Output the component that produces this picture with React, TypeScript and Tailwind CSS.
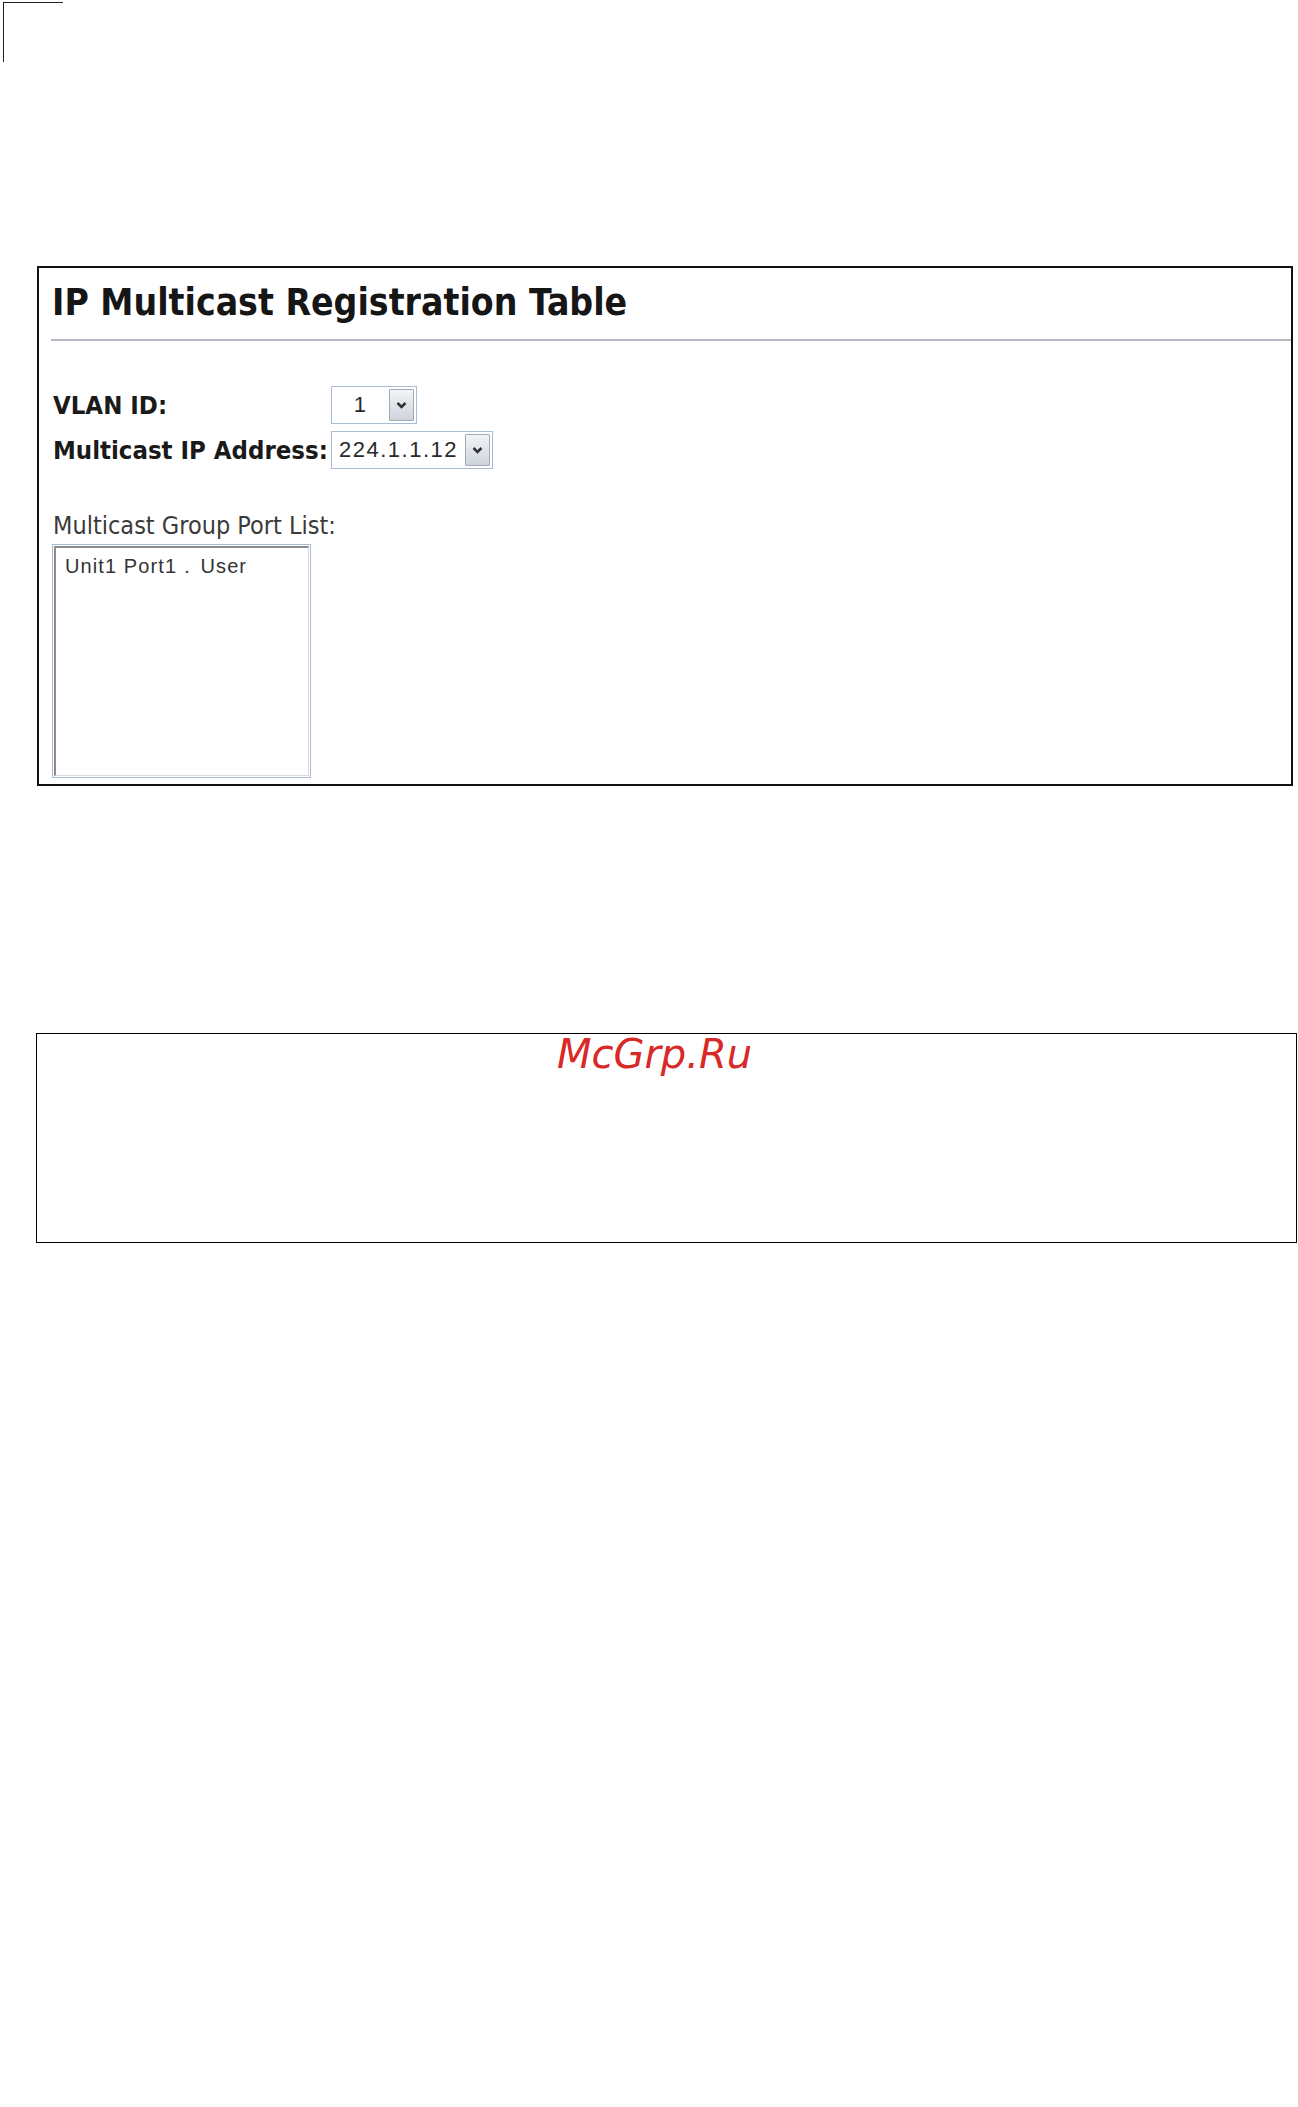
type SelectBoxProps = {
  value: string;
  width: string;
};

function Chevron() {
  return (
    <svg width="13" height="10" viewBox="0 0 13 10" fill="none">
      <path d="M2.5 3 L6.5 7 L10.5 3" stroke="#333" strokeWidth="2.6" />
    </svg>
  );
}

// fake windows-style combo box, as in the old switch web ui
function SelectBox({ value, width }: SelectBoxProps) {
  return (
    <div className={`flex h-[38px] items-stretch border border-[#a7bdd5] bg-white ${width}`}>
      <div className="flex flex-1 items-center justify-center font-['Liberation_Sans',Arial,sans-serif] text-[22px] leading-none tracking-[1.5px] text-[#2a2a2a]">
        {value}
      </div>
      <div className="my-[2px] mr-[2px] mt-[2px] flex w-[25px] items-center justify-center rounded-[1px] border border-[#9ea9ba] bg-gradient-to-b from-[#f3f4f7] to-[#cfd4dc]">
        <Chevron />
      </div>
    </div>
  );
}

export default function App() {
  const bold = "font-['DejaVu_Sans_Condensed','DejaVu_Sans',sans-serif] font-bold";

  return (
    <div className="min-h-[2107px] w-[1298px] bg-white">
      {/* page corner mark */}
      <div className="pl-[3px] pt-[2px]">
        <div className="h-[60px] w-[60px] border-l border-t border-[#231f20]" />
      </div>

      {/* IP Multicast Registration Table */}
      <div className="ml-[37px] mt-[204px] h-[520px] w-[1256px] border-2 border-[#111] pl-[13px] pt-[16px]">
        <h1 className={`${bold} text-[37px] leading-none text-[#161616]`}>IP Multicast Registration Table</h1>
        <div className="-ml-[1px] mt-[18px] border-t-2 border-[#b3b8c1]" />

        <div className="mt-[45px] grid grid-cols-[278px_auto] gap-y-[7px] pl-px">
          <div className={`${bold} flex items-center pt-[2px] text-[25.5px] leading-none text-[#1a1a1a]`}>VLAN ID:</div>
          <SelectBox value="1" width="w-[86px]" />
          <div className={`${bold} flex items-center pt-[2px] text-[25.5px] leading-none text-[#1a1a1a]`}>Multicast IP Address:</div>
          <SelectBox value="224.1.1.12" width="w-[162px]" />
        </div>

        <div className="mt-[44px] pl-px font-['DejaVu_Sans_Condensed','DejaVu_Sans',sans-serif] text-[25px] leading-none text-[#3a3a3a]">
          Multicast Group Port List:
        </div>

        <div className="mt-[6px] h-[234px] w-[259px] border border-[#a6bcd4] bg-white p-px">
          <div className="h-full w-full border-l-2 border-t-2 border-b border-r border-l-[#8c8c8c] border-t-[#8c8c8c] border-b-[#dadada] border-r-[#dadada] pl-[9px] pt-[8px]">
            <div className="font-['Liberation_Sans',Arial,sans-serif] text-[20px] leading-none tracking-[1.1px] text-[#333]">
              Unit1 Port1<span className="ml-[7px] mr-[3px]">.</span> User
            </div>
          </div>
        </div>
      </div>

      {/* second frame */}
      <div className="ml-[36px] mt-[247px] h-[210px] w-[1261px] border border-black">
        <div className="flex justify-center pr-[24px]">
          <span className="font-['DejaVu_Sans',sans-serif] text-[40px] italic leading-none text-[#d92828]">McGrp.Ru</span>
        </div>
      </div>
    </div>
  );
}
